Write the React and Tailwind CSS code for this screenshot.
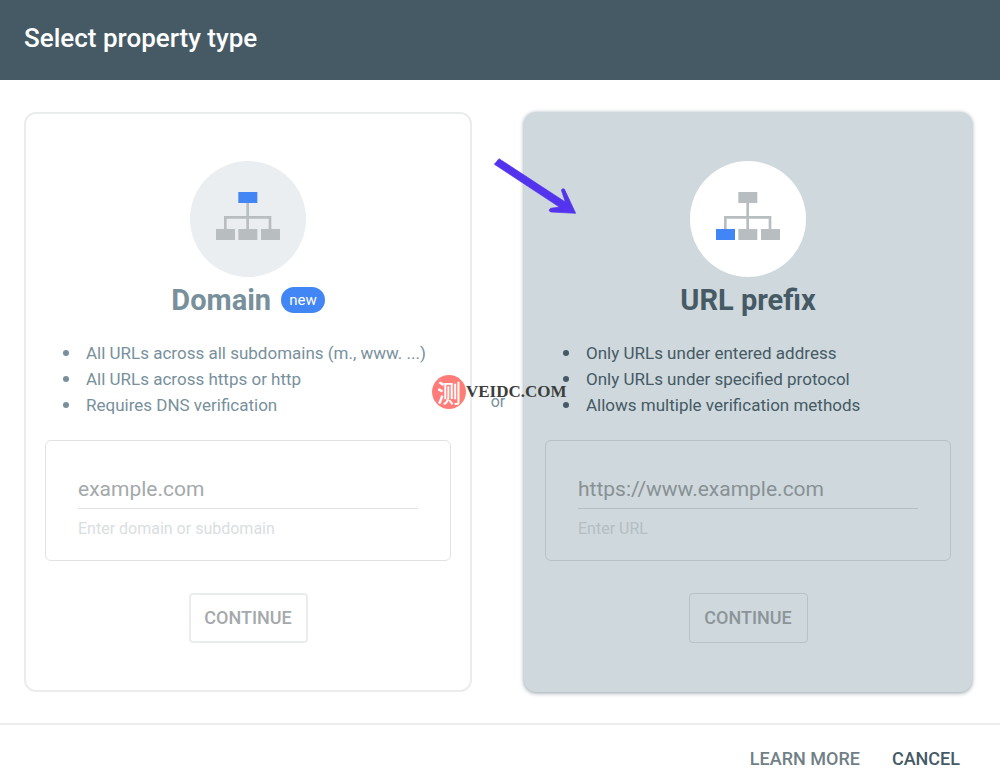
import { useState } from "react";
import clsx from "clsx";

const properties = [
   {
      id: "domain",
      title: "Domain",
      isNew: true,
      points: ["All URLs across all subdomains (m., www. ...)", "All URLs across https or http", "Requires DNS verification"],
      placeholder: "example.com",
      hint: "Enter domain or subdomain",
   },
   {
      id: "prefix",
      title: "URL prefix",
      isNew: false,
      points: ["Only URLs under entered address", "Only URLs under specified protocol", "Allows multiple verification methods"],
      placeholder: "https://www.example.com",
      hint: "Enter URL",
   },
];

function SitemapIcon({ active }) {
   const top = active === "domain" ? "#4285f4" : "#b8bec0";
   const left = active === "prefix" ? "#4285f4" : "#b8bec0";

   return (
      <svg viewBox="0 0 192 144" className="h-12 w-16" aria-hidden="true">
         <path d="M95 32V112M28 112V76H162V112" fill="none" stroke="#b8bec0" strokeWidth="8" />
         <rect x="67" y="0" width="57" height="33" fill={top} />
         <rect x="0" y="111" width="57" height="33" fill={left} />
         <rect x="67" y="111" width="57" height="33" fill="#b8bec0" />
         <rect x="135" y="111" width="57" height="33" fill="#b8bec0" />
      </svg>
   );
}

function PropertyCard({ property, selected }) {
   const [value, setValue] = useState("");
   const fieldId = `${property.id}-field`;

   return (
      <section
         className={clsx(
            "flex min-w-0 flex-1 flex-col items-center rounded-xl border-2 px-[19px] py-[47px]",
            selected ? "border-[#cfd8dd] bg-[#cfd8dd] text-[#455a64] shadow-[0_1px_4px_rgba(69,90,100,0.6)]" : "border-[#ebecec] bg-white text-[#78909c]"
         )}
      >
         <div className={clsx("flex size-[116px] justify-center rounded-full pt-[31px]", selected ? "bg-white" : "bg-[#eaeef1]")}>
            <SitemapIcon active={property.id} />
         </div>

         <div className="flex items-center gap-[10px]">
            <h2 className="text-[29px] leading-[46px] font-bold">{property.title}</h2>
            {property.isNew && <span className="rounded-full bg-[#4285f4] px-2 text-[15px] leading-[26px] text-white">new</span>}
         </div>

         <ul className="mt-[17px] w-full pl-[18px] text-[17px] leading-[26px]">
            {property.points.map(point => (
               <li key={point} className="flex items-center gap-[17px] before:size-[6px] before:shrink-0 before:rounded-full before:bg-current">
                  {point}
               </li>
            ))}
         </ul>

         <div className={clsx("mt-[22px] flex w-full flex-col rounded-md border px-8 pt-7 pb-[19px]", selected ? "border-[#b8c1c4]" : "border-[#e0e2e2]")}>
            <input
               id={fieldId}
               type="text"
               value={value}
               onChange={e => setValue(e.target.value)}
               placeholder={property.placeholder}
               className={clsx("h-10 w-full border-b bg-transparent text-[21px] outline-none", selected ? "border-[#b4bdc0] placeholder:text-[#879194]" : "border-[#e0e2e2] placeholder:text-[#a4a9ab]")}
            />
            <label htmlFor={fieldId} className={clsx("mt-2 text-base leading-6", selected ? "text-[#b5bec1]" : "text-[#dadedf]")}>
               {property.hint}
            </label>
         </div>

         <button type="button" className={clsx("mt-8 h-[50px] w-[119px] cursor-pointer rounded-sm text-lg font-medium", selected ? "border border-[#b8c1c4] text-[#8b9598]" : "border-2 border-[#ebecec] text-[#a4a9ab]")}>
            CONTINUE
         </button>
      </section>
   );
}

function Arrow() {
   return (
      <svg viewBox="42 174 252 174" className="absolute top-[46px] left-[22px] h-[58px] w-[84px]" aria-hidden="true">
         <path d="M43 193L57 176L256 306L245 273Q243 265 253 267L287 340L212 336Q203 331 212 325L238 321Z" fill="#5333ed" stroke="#5333ed" strokeWidth="2" strokeLinejoin="round" />
      </svg>
   );
}

function Watermark() {
   return (
      <div className="absolute top-[263px] left-[-40px] flex items-center whitespace-nowrap">
         <span className="flex size-[34px] items-center justify-center rounded-full bg-[#ff7c78] font-['Noto_Sans_CJK_SC',sans-serif] text-2xl leading-none font-medium text-white">测</span>
         <span className="font-['Liberation_Sans_Narrow','Liberation_Serif',serif] text-[17px] leading-[34px] font-bold text-[#3d3d3d]">VEIDC.COM</span>
      </div>
   );
}

export default function App() {
   return (
      <div className="flex min-h-screen flex-col bg-white font-[Roboto,sans-serif]">
         <header className="bg-[#455a64] px-6 pt-[18px] pb-[22px]">
            <h1 className="text-[26px] leading-10 font-medium text-white">Select property type</h1>
         </header>

         <main className="flex pt-8 pr-7 pb-[31px] pl-6">
            <PropertyCard property={properties[0]} selected={false} />
            <div className="relative z-10 flex w-[52px] shrink-0 items-center justify-center">
               <span className="text-base text-[#78909c]">or</span>
               <Arrow />
               <Watermark />
            </div>
            <PropertyCard property={properties[1]} selected />
         </main>

         <footer className="flex justify-end gap-8 border-t-2 border-[#ececec] px-10 py-5 text-lg font-medium">
            <a href="#learn-more" className="text-[#717f86]">LEARN MORE</a>
            <button type="button" className="cursor-pointer text-[#455a64]">CANCEL</button>
         </footer>
      </div>
   );
}
